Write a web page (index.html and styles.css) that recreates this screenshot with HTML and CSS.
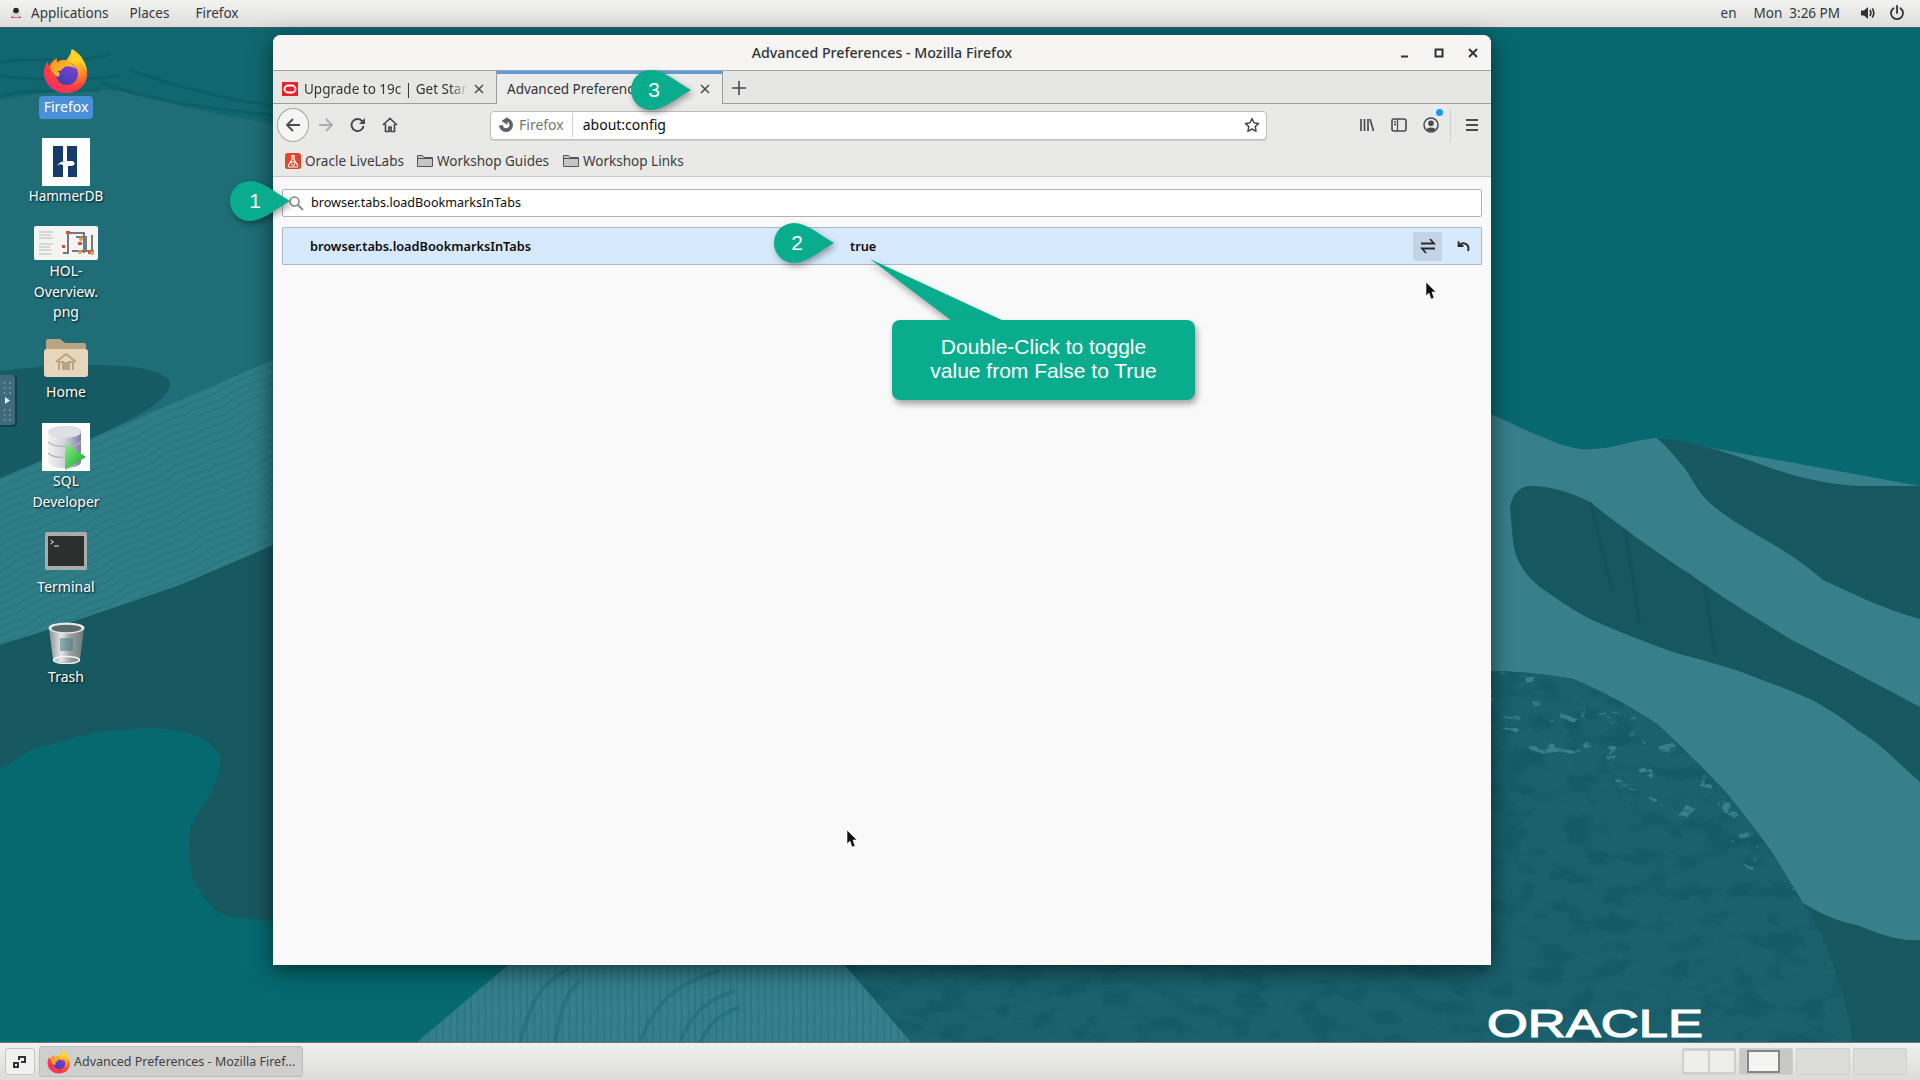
FILE: index.html
```html
<!DOCTYPE html>
<html lang="en">
<head>
<meta charset="utf-8">
<title>Advanced Preferences - Mozilla Firefox</title>
<link rel="stylesheet" href="styles.css">
</head>
<body>
<svg class="defs" width="0" height="0" aria-hidden="true">
  <defs>
    <radialGradient id="ffBody" cx="0.72" cy="0.2" r="0.95">
      <stop offset="0" stop-color="#ffe226"/><stop offset="0.35" stop-color="#ff9a1f"/><stop offset="0.7" stop-color="#ff3d3d"/><stop offset="1" stop-color="#f0287f"/>
    </radialGradient>
    <linearGradient id="ffBall" x1="0.7" y1="0" x2="0.3" y2="1">
      <stop offset="0" stop-color="#8a3fd0"/><stop offset="1" stop-color="#3a3fb8"/>
    </linearGradient>
    <linearGradient id="ffSwirl" x1="0" y1="0" x2="1" y2="0.6">
      <stop offset="0" stop-color="#ff8a1e"/><stop offset="1" stop-color="#ffcf2e"/>
    </linearGradient>
    <symbol id="firefox" viewBox="0 0 48 48">
      <path d="M30 1c-1 4 2 6 5 8 6 4 11 10 11 18 0 12-10 20-22 20S1 38 1 26c0-5 2-10 4-12 0 2 1 4 2 5 1-4 4-7 8-8-1 1-1 3 0 4 2-2 6-3 9-2 3-4 6-8 6-12z" fill="url(#ffBody)"/>
      <circle cx="25" cy="27" r="11.5" fill="url(#ffBall)"/>
      <path d="M7 19c2-3 5-6 8-8-1 2-1 3 0 4 3-2 7-3 10-1 5 2 8 5 10 8-3-2-6-3-9-3-2 0-4 1-5 2-1 2-4 3-6 3 3 2 3 4 1 6-4-1-7-5-9-11z" fill="url(#ffSwirl)"/>
      <path d="M30 1c7 3 15 12 16 24-3-7-7-11-12-13-4-2-6-6-4-11z" fill="#ffd32a"/>
    </symbol>
    <symbol id="folder" viewBox="0 0 16 14">
      <path d="M.5 12.5v-11h5l1.5 2h8.500v9z" fill="#c6c6c6" stroke="#55555a"/>
      <path d="M.5 4.500h15" stroke="#55555a"/>
    </symbol>
  </defs>
</svg>

<div class="screen">
  <svg class="wallpaper" viewBox="0 0 1920 1080" preserveAspectRatio="none" aria-hidden="true">
    <defs>
      <pattern id="waves" width="90" height="15" patternUnits="userSpaceOnUse" patternTransform="rotate(-24)">
        <path d="M0 4c15-3 30 3 45 0s30-3 45 0M0 11c15-3 30 3 45 0s30-2 45 0" fill="none" stroke="#27737e" stroke-width="1.300"/>
      </pattern>
      <pattern id="grain" width="7" height="60" patternUnits="userSpaceOnUse">
        <path d="M2 0c1 20-1 40 1 60" fill="none" stroke="#2a7380" stroke-width="1.500"/>
      </pattern>
      <filter id="flecks" x="0" y="0" width="100%" height="100%" color-interpolation-filters="sRGB">
        <feTurbulence type="fractalNoise" baseFrequency="0.05 0.09" numOctaves="3" seed="7"/>
        <feColorMatrix type="matrix" values="0 0 0 0 0.21  0 0 0 0 0.5  0 0 0 0 0.55  16 0 0 0 -10.400"/>
      </filter>
      <filter id="mottle" x="0" y="0" width="100%" height="100%" color-interpolation-filters="sRGB">
        <feTurbulence type="fractalNoise" baseFrequency="0.03 0.06" numOctaves="3" seed="3"/>
        <feColorMatrix type="matrix" values="0 0 0 0 0.07  0 0 0 0 0.33  0 0 0 0 0.38  5 0 0 0 -2.500"/>
      </filter>
      <clipPath id="speckClip">
        <path d="M845 965L1490 965L1490 671C1520 671 1550 675 1573 679C1600 690 1630 706 1657 724C1680 745 1703 768 1723 789C1745 815 1760 835 1773 854L1803 903C1822 930 1845 985 1853 1043H912z"/>
      </clipPath>
      <clipPath id="fleckClip">
        <path d="M1491 672C1550 675 1610 695 1657 724C1700 760 1750 815 1803 903L1760 880C1700 820 1640 790 1560 760L1491 735z"/>
      </clipPath>
    </defs>
    <rect width="1920" height="1080" fill="#076870"/>
    <rect y="28" width="280" height="540" fill="#1e6d77"/>
    <path d="M0 28H280V125C240 118 200 112 170 103C130 88 90 84 0 100z" fill="#11676f"/>
    <path d="M0 62c40-6 70 4 110-8M0 76c40 4 70 6 120 0M0 96c30-8 60-4 100-6M100 82c50 20 110 26 180 34M130 70c40 14 90 30 150 36" fill="none" stroke="#0a5a63" stroke-width="3" opacity=".65"/>
    <path d="M0 478L273 360H285V545L180 585C120 606 50 630 0 645z" fill="#2f7d87"/>
    <path d="M0 478L273 360H285V545L180 585C120 606 50 630 0 645z" fill="url(#waves)"/>
    <path d="M0 371C40 366 100 362 140 368C160 372 172 378 170 386C165 400 145 412 125 422C85 442 40 462 0 478z" fill="#165a64"/>
    <path d="M0 645C50 630 120 606 180 585L285 540V1043H0z" fill="#17575f"/>
    <path d="M0 768C20 760 30 745 50 745C70 738 95 730 122 730C160 726 210 728 220 757C222 790 195 810 190 830C188 850 190 875 196 885C205 900 218 916 232 917L285 922H540V1043H0z" fill="#05696f"/>
    <path d="M514 960H845L912 1043H416z" fill="#347f8b"/>
    <path d="M514 960H845L912 1043H416z" fill="url(#grain)"/>
    <path d="M520 1043c10-40 20-60 50-75M555 1043c5-30 10-50 25-62M640 1043c10-30 30-60 80-72M680 1043c8-22 20-42 55-52M700 1043c6-14 15-28 40-36" fill="none" stroke="#1f6d79" stroke-width="4" opacity=".6"/>

    <path d="M1480 410C1500 416 1550 445 1580 449C1610 451 1630 440 1657 438L1920 486V945H1480z" fill="#377f8b"/>
    <path d="M1657 438C1690 440 1725 452 1757 463C1790 476 1825 484 1857 486H1920V619C1885 610 1850 592 1823 580C1800 560 1780 548 1757 535C1735 522 1715 510 1703 496C1692 482 1688 470 1680 463C1672 452 1664 445 1657 438z" fill="#175760"/>
    <path d="M1510 509C1511 495 1520 486 1530 486C1550 486 1570 492 1590 502C1625 530 1660 555 1690 574C1725 600 1760 620 1790 639C1840 665 1885 688 1920 707V782C1900 765 1880 742 1857 730C1825 702 1790 690 1757 678C1725 665 1700 660 1673 652C1645 642 1615 630 1590 619C1570 608 1555 598 1540 587C1525 575 1515 560 1513 541z" fill="#175760"/>
    <path d="M1590 502L1612 590M1625 530L1640 625M1705 585L1715 655" stroke="#125059" stroke-width="4" fill="none" opacity=".6"/>
    <path d="M1480 671C1520 671 1550 675 1573 679C1600 690 1630 706 1657 724C1680 745 1703 768 1723 789C1745 815 1760 835 1773 854L1803 903C1822 915 1840 922 1857 925C1875 932 1897 942 1920 940V1043H912L845 965H1480z" fill="#17575f"/>
    <g clip-path="url(#speckClip)">
      <rect x="800" y="660" width="1120" height="400" fill="#1a606d"/>
      <rect class="mottle" x="800" y="660" width="1120" height="400" filter="url(#mottle)"/>
    </g>
    <g clip-path="url(#fleckClip)">
      <rect x="1480" y="660" width="340" height="250" filter="url(#flecks)"/>
    </g>
  </svg>

  <header class="topbar">
    <nav class="topbar-menu">
      <svg class="app-logo" viewBox="0 0 14 14" width="14" height="14"><ellipse cx="7" cy="8.500" rx="4.500" ry="4.500" fill="#d8d8d8"/><circle cx="7" cy="4.500" r="2.800" fill="#222"/><path d="M3 10c1 2 7 2 8 0l1 2H2z" fill="#c9302c"/></svg>
      <span class="menu-apps">Applications</span>
      <span class="menu-places">Places</span>
      <span class="menu-firefox">Firefox</span>
    </nav>
    <div class="topbar-status">
      <span class="status-lang">en</span>
      <span class="status-clock">Mon&nbsp; 3:26 PM</span>
      <svg class="status-vol" viewBox="0 0 16 16" width="16" height="16"><path d="M1 5.500h3L8 2v12L4 10.500H1z" fill="#2e3436"/><path d="M10 5c1 1.800 1 4.200 0 6M12.300 3.500c1.900 2.800 1.900 6.200 0 9" fill="none" stroke="#2e3436" stroke-width="1.700"/></svg>
      <svg class="status-power" viewBox="0 0 16 16" width="16" height="16"><path d="M4.600 3.200a6 6 0 1 0 6.800 0" fill="none" stroke="#2e3436" stroke-width="1.800" stroke-linecap="round"/><path d="M8 1v7" stroke="#2e3436" stroke-width="1.800" stroke-linecap="round"/></svg>
    </div>
  </header>

  <div class="desktop-spacer"></div>

  <footer class="taskbar">
    <button class="show-desktop" type="button"><svg viewBox="0 0 16 16" width="16" height="16"><path d="M1 8h6v6H1zM3 10v2h2v-2z" fill="#2e3436" fill-rule="evenodd"/><path d="M6 2h8v7H9V7h3V4H8v2H6z" fill="#2e3436"/></svg></button>
    <button class="task" type="button"><svg class="task-ff" width="24" height="24"><use href="#firefox"/></svg><span>Advanced Preferences - Mozilla Firef...</span></button>
    <div class="workspaces">
      <div class="ws ws-split"><i></i><i></i></div>
      <div class="ws ws-active"><i></i></div>
      <div class="ws"></div>
      <div class="ws"></div>
    </div>
  </footer>

  <div class="logo-oracle"><svg viewBox="0 0 216 30" width="216" height="30"><text x="0" y="29" textLength="216" lengthAdjust="spacingAndGlyphs" class="oracle-text">ORACLE</text></svg></div>

  <div class="side-tab"><svg viewBox="0 0 17 52" width="17" height="52"><path d="M0 0h13a4 4 0 0 1 4 4v44a4 4 0 0 1-4 4H0z" fill="#123f49"/><path d="M0 0h12a3 3 0 0 1 3 3v44a3 3 0 0 1-3 3H0z" fill="#3f6a7b"/><g fill="#7b98a3"><circle cx="4.500" cy="8" r="1"/><circle cx="10" cy="8" r="1"/><circle cx="4.500" cy="13" r="1"/><circle cx="10" cy="13" r="1"/><circle cx="4.500" cy="18" r="1"/><circle cx="10" cy="18" r="1"/><circle cx="4.500" cy="35" r="1"/><circle cx="10" cy="35" r="1"/><circle cx="4.500" cy="40" r="1"/><circle cx="10" cy="40" r="1"/><circle cx="4.500" cy="45" r="1"/><circle cx="10" cy="45" r="1"/></g><path d="M5 22l5 3.500-5 3.500z" fill="#e8eef0"/></svg></div>

  <div class="desk-icon di-firefox">
    <svg width="46" height="46"><use href="#firefox"/></svg>
    <span class="desk-label selected">Firefox</span>
  </div>
  <div class="desk-icon di-hammer">
    <svg width="48" height="48" viewBox="0 0 48 48"><rect width="48" height="48" fill="#fff"/><rect x="11" y="8" width="24" height="31" fill="#163a6b"/><rect x="21" y="8" width="4" height="15" fill="#fff"/><path d="M15 28c2-4 6-5 10-5h6l2 3-3 2h-4v11h-5V27c-2-1-4-1-6 1z" fill="#fff"/></svg>
    <span class="desk-label">HammerDB</span>
  </div>
  <div class="desk-icon di-hol">
    <svg width="64" height="34" viewBox="0 0 64 34"><rect width="64" height="34" rx="2" fill="#f4f4f2"/><g stroke="#b9b9b9" stroke-width="1"><path d="M5 6h14M5 9h12M5 12h14M5 18h14M5 21h11M5 24h13M5 28h12"/></g><g fill="none" stroke="#75797c" stroke-width="2"><path d="M34 7v20h-5M34 7h16v20M42 11h10v14M38 25h22M58 9v17"/></g><g fill="#d9503a"><rect x="32" y="5" width="4" height="3"/><rect x="28" y="19" width="3" height="3"/><rect x="44" y="16" width="4" height="3"/><rect x="54" y="25" width="3" height="3"/></g><g fill="#e69a4a"><circle cx="47" cy="13" r="2"/><circle cx="46" cy="26" r="2"/><circle cx="58" cy="27" r="2"/></g></svg>
    <span class="desk-label">HOL-<br>Overview.<br>png</span>
  </div>
  <div class="desk-icon di-home">
    <svg width="44" height="42" viewBox="0 0 44 42"><path d="M2 6a2 2 0 0 1 2-2h12l5 4h19a2 2 0 0 1 2 2v12H2z" fill="#b9a483"/><path d="M0 17a3 3 0 0 1 3-3h38a3 3 0 0 1 3 3v22a3 3 0 0 1-3 3H3a3 3 0 0 1-3-3z" fill="#e7d6bb"/><path d="M12 27l10-8 10 8M15 35v-8h4v7h2v-6h2v6h2v-7h4v8" fill="none" stroke="#b9a483" stroke-width="2"/></svg>
    <span class="desk-label">Home</span>
  </div>
  <div class="desk-icon di-sql">
    <svg width="48" height="48" viewBox="0 0 48 48"><defs><linearGradient id="cyl" x1="0" x2="1"><stop offset="0" stop-color="#f3f3f5"/><stop offset=".55" stop-color="#cfcfd8"/><stop offset="1" stop-color="#7d7fae"/></linearGradient><linearGradient id="play" x1="0" y1="0" x2="1" y2="1"><stop offset="0" stop-color="#8cf08c"/><stop offset="1" stop-color="#0aa31e"/></linearGradient></defs><rect width="48" height="48" fill="#fff"/><path d="M6 9c0-8 33-8 33 0v30c0 8-33 8-33 0z" fill="url(#cyl)"/><ellipse cx="22.500" cy="9" rx="16.500" ry="6" fill="#dfdfe6"/><path d="M6 19c6 6 27 6 33 0M6 30c6 6 27 6 33 0" fill="none" stroke="#b5b5bd" stroke-width="1.200"/><path d="M23 20l21 14-21 13z" fill="url(#play)"/></svg>
    <span class="desk-label">SQL<br>Developer</span>
  </div>
  <div class="desk-icon di-term">
    <svg width="42" height="38" viewBox="0 0 42 38"><rect width="42" height="38" rx="1.500" fill="#a9abaa"/><rect x="3" y="4" width="36" height="30" fill="#2b302f"/><path d="M5.500 8l3 2-3 2" fill="none" stroke="#e8e8e8"/><path d="M9 14h5" stroke="#e8e8e8"/></svg>
    <span class="desk-label">Terminal</span>
  </div>
  <div class="desk-icon di-trash">
    <svg width="37" height="42" viewBox="0 0 37 42"><defs><linearGradient id="can" x1="0" x2="1"><stop offset="0" stop-color="#8a8f8f"/><stop offset=".35" stop-color="#e8e8e8"/><stop offset=".6" stop-color="#9aa3a3"/><stop offset="1" stop-color="#6f7575"/></linearGradient></defs><path d="M1 7l4 30c1 5 26 5 27 0l4-30z" fill="url(#can)"/><ellipse cx="18.500" cy="6" rx="18" ry="5.500" fill="#e9e9e9"/><ellipse cx="18.500" cy="6.500" rx="15" ry="3.800" fill="#5d6a6c"/><rect x="12" y="16" width="13" height="13" fill="#4f7f87" opacity=".6"/><ellipse cx="18.500" cy="38" rx="13" ry="3.500" fill="none" stroke="#f2f2f2" stroke-width="1.500"/></svg>
    <span class="desk-label">Trash</span>
  </div>

  <main class="window">
    <div class="titlebar">
      <span></span>
      <h1 class="win-title">Advanced Preferences - Mozilla Firefox</h1>
      <div class="win-controls">
        <svg viewBox="0 0 10 10" width="10" height="10"><path d="M1 8.500h7" stroke="#2e3436" stroke-width="2"/></svg>
        <svg viewBox="0 0 10 10" width="10" height="10"><rect x="1.500" y="1.500" width="7" height="7" fill="none" stroke="#2e3436" stroke-width="2"/></svg>
        <svg viewBox="0 0 10 10" width="10" height="10"><path d="M1 1l8 8M9 1l-8 8" stroke="#2e3436" stroke-width="2"/></svg>
      </div>
    </div>

    <div class="tabstrip">
      <div class="tab tab-first">
        <svg class="tab-favicon" viewBox="0 0 16 14" width="16" height="14"><rect width="16" height="14" fill="#e8222a"/><rect x="2.500" y="3.500" width="11" height="7" rx="3.500" fill="none" stroke="#fff" stroke-width="1.800"/></svg>
        <span class="tab-title">Upgrade to 19c | Get Star</span>
        <svg class="tab-close" viewBox="0 0 10 10" width="10" height="10"><path d="M1 1l8 8M9 1l-8 8" stroke="#4a4a4f" stroke-width="1.500"/></svg>
      </div>
      <div class="tab tab-active">
        <span class="tab-title tab-title-plain">Advanced Preferences</span>
        <svg class="tab-close" viewBox="0 0 10 10" width="10" height="10"><path d="M1 1l8 8M9 1l-8 8" stroke="#4a4a4f" stroke-width="1.500"/></svg>
      </div>
      <svg class="tab-new" viewBox="0 0 14 14" width="14" height="14"><path d="M7 0v14M0 7h14" stroke="#4a4a4f" stroke-width="1.600"/></svg>
    </div>

    <div class="navbar">
      <button class="nav-btn nav-back" type="button"><svg viewBox="0 0 16 16" width="16" height="16"><path d="M15 8H2M8 2L2 8l6 6" fill="none" stroke="#4a4a4f" stroke-width="1.800"/></svg></button>
      <button class="nav-btn" type="button"><svg viewBox="0 0 16 16" width="16" height="16"><path d="M1 8h13M8 2l6 6-6 6" fill="none" stroke="#adadb0" stroke-width="1.800"/></svg></button>
      <button class="nav-btn" type="button"><svg viewBox="0 0 16 16" width="16" height="16"><path d="M13.500 9a6 6 0 1 1-1.700-5.200L14 6" fill="none" stroke="#4a4a4f" stroke-width="2"/><path d="M15 1v6H9z" fill="#4a4a4f"/></svg></button>
      <button class="nav-btn" type="button"><svg viewBox="0 0 16 16" width="16" height="16"><path d="M1 8l7-6.500L15 8M3.500 7v7.500h3.500V10h2v4.500h3.500V7" fill="none" stroke="#4a4a4f" stroke-width="1.700"/></svg></button>
      <div class="urlbar">
        <svg class="url-id" viewBox="0 0 16 16" width="16" height="16"><path d="M8 1A7 7 0 1 1 1 8.500l4-.5A3.200 3.200 0 1 0 8 4.800z" fill="#5f6368"/><path d="M9.500 0L3.500 4l6 4z" fill="#5f6368"/></svg>
        <span class="url-label">Firefox</span>
        <span class="url-text">about:config</span>
        <svg class="url-star" viewBox="0 0 16 16" width="16" height="16"><path d="M8 1.500l2 4.300 4.600.6-3.400 3.200.9 4.700L8 12l-4.100 2.300.9-4.700L1.400 6.400 6 5.800z" fill="none" stroke="#4a4a4f" stroke-width="1.500" stroke-linejoin="round"/></svg>
      </div>
      <button class="nav-btn nav-lib" type="button"><svg viewBox="0 0 16 16" width="16" height="16"><path d="M2 2v12M5.500 2v12M9 2v12M11 2l3.500 12" fill="none" stroke="#4a4a4f" stroke-width="1.700"/></svg></button>
      <button class="nav-btn" type="button"><svg viewBox="0 0 16 16" width="16" height="16"><rect x="1" y="2" width="14" height="12" rx="2" fill="none" stroke="#4a4a4f" stroke-width="1.600"/><path d="M6.500 2v12M3 5h2M3 7.500h2" stroke="#4a4a4f" stroke-width="1.300"/></svg></button>
      <button class="nav-btn nav-account" type="button"><svg viewBox="0 0 16 16" width="16" height="16"><circle cx="8" cy="8" r="7" fill="none" stroke="#4a4a4f" stroke-width="1.500"/><circle cx="8" cy="6.300" r="2.800" fill="#4a4a4f"/><path d="M3.500 12.500c1-2.800 8-2.800 9 0-2 2-7 2-9 0z" fill="#4a4a4f"/></svg><i class="badge"></i></button>
      <span class="nav-sep"></span>
      <button class="nav-btn nav-menu" type="button"><svg viewBox="0 0 16 16" width="16" height="16"><path d="M2 3h12M2 8h12M2 13h12" stroke="#4a4a4f" stroke-width="1.800"/></svg></button>
    </div>

    <div class="bookmarks">
      <span class="bm bm-labs"><svg viewBox="0 0 16 16" width="16" height="16"><rect width="16" height="16" rx="2.500" fill="#d9472f"/><path d="M6.500 2.500h3M7 3v3.500L3.500 12c-.5 1 0 2 1 2h7c1 0 1.500-1 1-2L9 6.500V3" fill="none" stroke="#fff" stroke-width="1.200"/><circle cx="8" cy="10.500" r="1.800" fill="none" stroke="#fff"/></svg>Oracle LiveLabs</span>
      <span class="bm bm-guides"><svg width="16" height="14"><use href="#folder"/></svg>Workshop Guides</span>
      <span class="bm bm-links"><svg width="16" height="14"><use href="#folder"/></svg>Workshop Links</span>
    </div>

    <section class="page">
      <div class="search">
        <svg viewBox="0 0 16 16" width="16" height="16"><circle cx="6.500" cy="6.500" r="4.500" fill="none" stroke="#85858a" stroke-width="1.600"/><path d="M10 10l5 5" stroke="#85858a" stroke-width="1.800"/></svg>
        <span class="search-text">browser.tabs.loadBookmarksInTabs</span>
      </div>
      <div class="pref-row">
        <span class="pref-name">browser.tabs.loadBookmarksInTabs</span>
        <span class="pref-value">true</span>
        <button class="pref-btn pref-toggle" type="button"><svg viewBox="0 0 16 16" width="16" height="16"><path d="M1 5.500h13L10 1M15 10.500H2L6 15" fill="none" stroke="#2a2a2e" stroke-width="1.800"/></svg></button>
        <button class="pref-btn" type="button"><svg viewBox="0 0 16 16" width="13" height="13"><path d="M2 1.500v6h6" fill="none" stroke="#2a2a2e" stroke-width="2.400"/><path d="M2.500 7C5 3.500 9 3 12 5.500c2.500 2.200 2.500 5 1.500 8" fill="none" stroke="#2a2a2e" stroke-width="2.400"/></svg></button>
      </div>
    </section>
  </main>

  <div class="bubble bubble-1"><svg viewBox="0 0 62 42" width="62" height="42"><path d="M21 1C33 1 44 11 61 21 44 31 33 41 21 41A20 20 0 0 1 21 1z"/></svg><span>1</span></div>
  <div class="bubble bubble-2"><svg viewBox="0 0 62 42" width="62" height="42"><path d="M21 1C33 1 44 11 61 21 44 31 33 41 21 41A20 20 0 0 1 21 1z"/></svg><span>2</span></div>
  <div class="bubble bubble-3"><svg viewBox="0 0 62 42" width="62" height="42"><path d="M21 1C33 1 44 11 61 21 44 31 33 41 21 41A20 20 0 0 1 21 1z"/></svg><span>3</span></div>

  <div class="callout">
    <svg class="callout-tail" viewBox="0 0 140 64" width="140" height="64"><path d="M0 0L82 62H134z"/></svg>
    <div class="callout-box">Double-Click to toggle<br>value from False to True</div>
  </div>

  <svg class="cursor cursor-a" viewBox="0 0 12 18" width="12" height="18"><path d="M1 0v14l3-3 2 6 3-1-2-6h4z" fill="#111" stroke="#fff" stroke-width=".6"/></svg>
  <svg class="cursor cursor-b" viewBox="0 0 12 18" width="12" height="18"><path d="M1 0v14l3-3 2 6 3-1-2-6h4z" fill="#111" stroke="#fff" stroke-width=".6"/></svg>
</div>
</body>
</html>
```

FILE: styles.css
```css
* { box-sizing: border-box; }
html, body { margin: 0; padding: 0; }
body { font-family: "Noto Sans", "Open Sans", sans-serif; font-size: 14px; color: #2e3436; overflow: hidden; }
button { font: inherit; color: inherit; background: none; border: 0; padding: 0; }
svg { display: block; flex: none; }
.defs { position: absolute; }

.screen { position: relative; width: 1920px; height: 1080px; display: flex; flex-direction: column; overflow: hidden; background: #076870; }
.wallpaper { position: absolute; inset: 0; width: 1920px; height: 1080px; }
.mottle { opacity: .55; }

.topbar { position: relative; height: 28px; flex: none; display: flex; align-items: center; justify-content: space-between; background: linear-gradient(#f2f2f0, #dededc); border-bottom: 1px solid #4c5558; padding: 0 15px 2px 9px; font-size: 13.500px; color: #33393b; }
.topbar-menu, .topbar-status { display: flex; align-items: center; }
.app-logo { margin-right: 8px; }
.menu-places { margin-left: 21px; }
.menu-firefox { margin-left: 26px; }
.status-lang { margin-right: 2px; }
.status-clock { margin-left: 15px; }
.status-vol { margin-left: 20px; }
.status-power { margin-left: 13px; }

.desktop-spacer { flex: 1; }

.taskbar { position: relative; height: 38px; flex: none; display: flex; align-items: center; padding: 0 13px 0 5px; background: linear-gradient(#f0f0ee, #dcdcd9); border-top: 1px solid #6f7476; }
.show-desktop { width: 30px; height: 27px; display: flex; align-items: center; justify-content: center; background: #f1f1ef; border: 1px solid #c4c4c2; border-radius: 3px; }
.task { width: 264px; height: 31px; margin-left: 4px; display: flex; align-items: center; gap: 3px; padding-left: 7px; background: #cfcfcd; border: 1px solid #bcbcba; border-radius: 3px; font-size: 12.500px; color: #3d4244; white-space: nowrap; }
.workspaces { margin-left: auto; display: flex; gap: 3px; }
.ws { width: 54px; height: 27px; background: #dcdcda; border: 1px solid #d0d0ce; border-radius: 2px; }
.ws-split { display: flex; gap: 2px; padding: 2px 1px; background: #cfcfcd; }
.ws-split i { flex: 1; background: #eeeeec; }
.ws-active { display: flex; align-items: center; padding-left: 7px; background: #c8c8c6; }
.ws-active i { width: 33px; height: 23px; background: #f4f4f2; border: 2px solid #86868a; }

.logo-oracle { position: absolute; left: 1487px; top: 1008px; }
.logo-oracle svg { overflow: visible; }
.oracle-text { font-family: "Liberation Sans", sans-serif; font-weight: 400; font-size: 39px; fill: #fff; stroke: #fff; stroke-width: 1.200px; }

.side-tab { position: absolute; left: 0; top: 375px; }

.desk-icon { position: absolute; left: 16px; width: 100px; display: flex; flex-direction: column; align-items: center; }
.desk-label { display: block; color: #fff; font-size: 14px; line-height: 20.500px; text-align: center; text-shadow: 1px 1px 2px rgba(0,0,0,.85); }
.desk-label.selected { margin-top: 2px; padding: 1px 5px; background: #4a90d9; border-radius: 4px; text-shadow: none; }
.di-firefox { top: 48px; }
.di-hammer { top: 138px; }
.di-hammer .desk-label { font-size: 13.500px; }
.di-hol { top: 226px; }
.di-hol .desk-label { margin-top: 1px; }
.di-home { top: 335px; }
.di-home .desk-label { margin-top: 5px; }
.di-sql { top: 423px; }
.di-term { top: 532px; }
.di-term .desk-label { margin-top: 7px; }
.di-trash { top: 622px; }
.di-trash .desk-label { margin-top: 3px; }

.window { position: absolute; left: 273px; top: 35px; width: 1218px; height: 930px; display: flex; flex-direction: column; background: #f9f9fa; border-radius: 8px 8px 0 0; box-shadow: 0 5px 22px rgba(0,0,0,.55); overflow: hidden; }
.titlebar { height: 36px; flex: none; display: grid; grid-template-columns: 1fr auto 1fr; align-items: center; background: #f6f5f4; border-bottom: 1px solid #a3a3a1; }
.win-title { margin: 0; font-size: 14.200px; font-weight: 500; color: #2e3436; }
.win-controls { display: flex; justify-content: flex-end; gap: 24px; padding-right: 13px; }

.tabstrip { height: 33px; flex: none; display: flex; background: #e6e6e4; border-bottom: 1px solid #9d9d9b; font-size: 13.500px; color: #333; }
.tab { height: 33px; display: flex; align-items: center; }
.tab-first { width: 224px; padding: 2px 12px 0 9px; gap: 6px; border-right: 1px solid #9d9d9b; }
.tab-active { width: 226px; padding: 0 12px 0 10px; gap: 6px; background: #ececea; border-top: 3px solid #5d9bdd; border-right: 1px solid #9d9d9b; }
.tab-title { flex: 1; overflow: hidden; white-space: nowrap; -webkit-mask-image: linear-gradient(to left, transparent 0, #000 18px); mask-image: linear-gradient(to left, transparent 0, #000 18px); }
.tab-title-plain { -webkit-mask-image: none; mask-image: none; }
.tab-new { margin: 10px 0 0 9px; }

.navbar { height: 42px; flex: none; display: flex; align-items: center; padding-left: 4px; background: #e9e9e7; }
.nav-btn { position: relative; width: 32px; height: 32px; display: flex; align-items: center; justify-content: center; }
.nav-back { height: 34px; background: #f5f5f4; border: 1px solid #a4a4a2; border-radius: 50%; margin-right: 1px; }
.urlbar { width: 777px; height: 29px; margin-left: 84px; display: flex; align-items: center; padding: 0 6px 1px 7px; background: #fff; border: 1px solid #bdbdbb; border-radius: 4px; box-shadow: 0 1px 0 #cfcfcd; font-size: 14px; }
.url-label { margin-left: 5px; padding-right: 8px; border-right: 1px solid #cfcfcf; color: #737373; line-height: 24px; }
.url-text { margin-left: 10px; flex: 1; color: #0c0c0d; }
.nav-lib { margin-left: 84px; }
.badge { position: absolute; right: 4px; top: 0; width: 7px; height: 7px; border-radius: 50%; background: #0a9dff; }
.nav-sep { width: 1px; height: 34px; margin-left: 3px; background: #cfcfcd; }
.nav-menu { margin-left: 5px; }

.bookmarks { height: 31px; flex: none; display: flex; align-items: center; background: #e9e9e7; border-bottom: 1px solid #c9c9c7; padding: 0 0 0 12px; font-size: 13.500px; color: #3c3c40; }
.bm { display: flex; align-items: center; gap: 4px; }
.bm-guides { margin-left: 13px; }
.bm-links { margin-left: 14px; }

.page { flex: 1; display: flex; flex-direction: column; gap: 10px; padding: 12px 9px 0; background: #f9f9fa; font-size: 13px; color: #0c0c0d; }
.search { height: 28px; display: flex; align-items: center; gap: 7px; padding: 0 0 1px 5px; background: #fff; border: 1px solid #b1b1b3; border-radius: 2px; font-size: 12.600px; }
.pref-row { height: 38px; display: flex; align-items: center; padding-left: 27px; background: #d7e9fc; border: 1px solid #b1b8c0; border-radius: 1px; font-size: 12.750px; font-weight: 600; }
.pref-name { width: 540px; }
.pref-value { flex: 1; }
.pref-btn { width: 29px; height: 29px; display: flex; align-items: center; justify-content: center; }
.pref-toggle { background: #c2d4e6; border-radius: 2px; margin-right: 7px; }
.pref-row .pref-btn:last-child { margin-right: 3px; }

.bubble { position: absolute; width: 62px; height: 42px; }
.bubble svg { fill: #09ad8e; filter: drop-shadow(2px 3px 3px rgba(0,0,0,.35)); }
.bubble span { position: absolute; left: 5px; top: 0; width: 42px; height: 42px; display: flex; align-items: center; justify-content: center; color: #fff; font-family: "Liberation Sans", sans-serif; font-size: 21px; }
.bubble-1 { left: 229px; top: 180px; }
.bubble-2 { left: 773px; top: 222px; }
.bubble-2 span { left: 3px; }
.bubble-3 { left: 630px; top: 69px; }
.bubble-3 span { left: 3px; }

.callout { position: absolute; left: 892px; top: 320px; width: 303px; height: 80px; }
.callout-tail { position: absolute; left: -22px; top: -61px; fill: #09ad8e; filter: drop-shadow(-2px 2px 3px rgba(0,0,0,.3)); }
.callout-box { position: absolute; inset: 0; display: flex; align-items: center; justify-content: center; text-align: center; padding-bottom: 2px; background: #09ad8e; border-radius: 8px; box-shadow: 2px 4px 6px rgba(0,0,0,.35); color: #fff; font-family: "Liberation Sans", sans-serif; font-size: 21px; line-height: 24px; }

.cursor { position: absolute; }
.cursor-a { left: 1425px; top: 282px; }
.cursor-b { left: 846px; top: 830px; }
```
